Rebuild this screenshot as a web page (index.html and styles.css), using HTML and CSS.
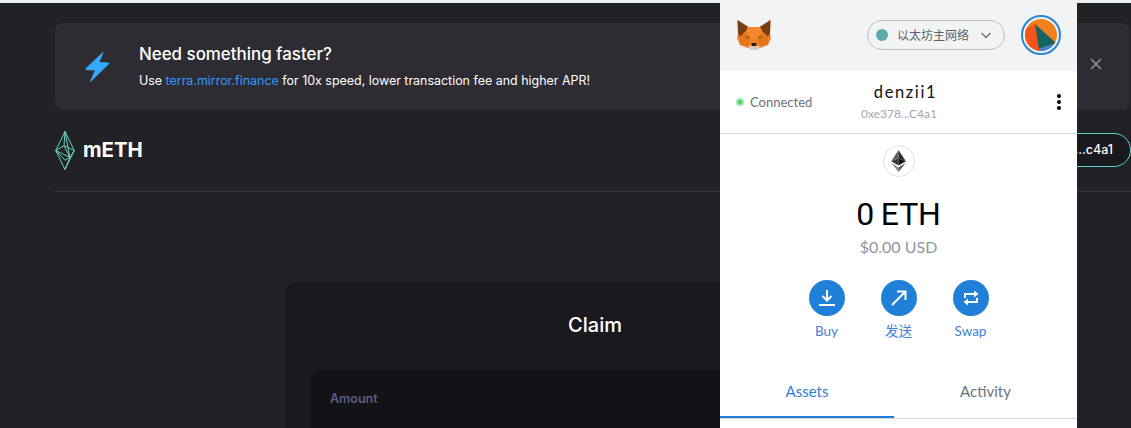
FILE: index.html
```html
<!DOCTYPE html>
<html lang="en">
<head>
    <meta charset="UTF-8">
    <meta name="viewport" content="width=device-width, initial-scale=1.0">
    <title>mETH Claim</title>
    <link rel="stylesheet" href="styles.css">
</head>
<body>
    <div class="topline"></div>
    <div class="app">
        <div class="banner">
            <svg class="bolt" width="25" height="30" viewBox="0 0 25 30">
                <path d="M18 0 L0.500 16.500 Q0 18 1.500 18 L10 18.500 L5 29 Q5 30 6 29.500 L24 12 Q25 10.500 23 10.500 L14.500 10 L18.500 0.500 Q18.500 0 18 0 Z" fill="#34a9ff"/>
            </svg>
            <div class="banner-text">
                <h2>Need something faster?</h2>
                <p>Use <a href="#">terra.mirror.finance</a> for 10x speed, lower transaction fee and higher APR!</p>
            </div>
            <svg class="close" width="12" height="12" viewBox="0 0 12 12">
                <path d="M1 1 L11 11 M11 1 L1 11" stroke="#8d8e93" stroke-width="1.600" fill="none"/>
            </svg>
        </div>
        <header class="nav">
            <div class="logo">
                <svg width="20" height="39" viewBox="0 0 20 40" fill="none" stroke="#69d4c5" stroke-width="1">
                    <path d="M10 0.500 L19.500 20 L10 39.500 L0.500 20 Z"/>
                    <path d="M10 0.500 L9 15 L0.500 20 L15 27 L19.500 20 L9 15 L15 27 L10 39.500"/>
                    <path d="M10 0.500 L15 27 M0.500 20 L10 30 L15 27"/>
                </svg>
                <span>mETH</span>
            </div>
            <div class="wallet">0xe378...c4a1</div>
        </header>
        <section class="claim">
            <h3>Claim</h3>
            <div class="field"><label>Amount</label></div>
        </section>
    </div>

    <div class="popup">
        <div class="mm-top">
            <svg class="fox" width="34" height="32" viewBox="0 0 34 32">
                <path d="M0.500 1 L12 8 L22 8 L33.500 1 L33 14 L34 19 L31 26 L23 29 L11 29 L3 26 L0 19 L1 14 Z" fill="#ef8229"/>
                <path d="M0.500 1 L11 8 L9 12 L3 18 L1 14 Z" fill="#763d16"/>
                <path d="M33.500 1 L23 8 L25 12 L31 18 L33 14 Z" fill="#763d16"/>
                <path d="M11 8 L23 8 L25 12 L21 20 L13 20 L9 12 Z" fill="#f5882e"/>
                <path d="M3 18 L9 12 L13 20 L11 27 L3 25 Z M31 18 L25 12 L21 20 L23 27 L31 25 Z" fill="#e2761b"/>
                <path d="M7 18 L13 17 L12 20 Z M27 18 L21 17 L22 20 Z" fill="#a8591c"/>
                <path d="M11 27 L23 27 L21 31 L13 31 Z" fill="#d9c9b9"/>
                <path d="M14.500 24 L19.500 24 L19 27 L15 27 Z" fill="#231a14"/>
            </svg>
            <div class="network">
                <span class="net-dot"></span>
                <span class="net-name">以太坊主网络</span>
                <svg width="12" height="7" viewBox="0 0 12 7"><path d="M1.500 1 L6 5.500 L10.500 1" stroke="#6a737d" stroke-width="1.300" fill="none"/></svg>
            </div>
            <div class="avatar">
                <svg width="32" height="32" viewBox="0 0 32 32">
                    <rect width="32" height="32" fill="#ef801e"/>
                    <path d="M10 5 L0 10 L0 32 L15 32 Z" fill="#f5541a"/>
                    <path d="M10 5 L31 24 L14 30 Z" fill="#16635f"/>
                    <path d="M14 30 L31 24 L24 32 L14 32 Z" fill="#3b82e0"/>
                </svg>
            </div>
        </div>
        <div class="account">
            <div class="status"><i></i>Connected</div>
            <div class="acc-name">
                <strong>denzii1</strong>
                <small>0xe378...C4a1</small>
            </div>
            <div class="kebab"><i></i><i></i><i></i></div>
        </div>
        <div class="balance">
            <div class="eth-icon">
                <svg width="15" height="22" viewBox="0 0 16 24">
                    <path d="M8 0 L0 12.200 L8 9 Z" fill="#606060"/>
                    <path d="M8 0 L16 12.200 L8 9 Z" fill="#2e2e2e"/>
                    <path d="M0 12.200 L8 17 L8 9 Z" fill="#3a3a3a"/>
                    <path d="M16 12.200 L8 17 L8 9 Z" fill="#141414"/>
                    <path d="M0 14 L8 24 L8 19 Z" fill="#8a8a8a"/>
                    <path d="M16 14 L8 24 L8 19 Z" fill="#555"/>
                </svg>
            </div>
            <div class="amount">0 ETH</div>
            <div class="usd">$0.00 USD</div>
            <div class="actions">
                <div class="action">
                    <span class="round">
                        <svg width="18" height="18" viewBox="0 0 18 18" fill="none" stroke="#fff" stroke-width="2">
                            <path d="M9 1 L9 11 M4.500 7 L9 11.500 L13.500 7 M1 16 L17 16"/>
                        </svg>
                    </span>
                    Buy
                </div>
                <div class="action">
                    <span class="round">
                        <svg width="18" height="18" viewBox="0 0 18 18" fill="none" stroke="#fff" stroke-width="2">
                            <path d="M2 16 L15 3 M7 2.500 L15.500 2.500 L15.500 11"/>
                        </svg>
                    </span>
                    发送
                </div>
                <div class="action">
                    <span class="round">
                        <svg width="18" height="18" viewBox="0 0 18 18" fill="none" stroke="#fff" stroke-width="2">
                            <path d="M3 9 L3 5 L13 5 M15 9 L15 13 L5 13"/>
                            <path d="M12 1.500 L16.500 5 L12 8.500 Z M6 9.500 L1.500 13 L6 16.500 Z" fill="#fff" stroke="none"/>
                        </svg>
                    </span>
                    Swap
                </div>
            </div>
        </div>
        <div class="tabs">
            <div class="tab active">Assets</div>
            <div class="tab">Activity</div>
        </div>
    </div>
</body>
</html>
```

FILE: styles.css
```css
* {
    box-sizing: border-box;
}

html, body {
    height: 100%;
}

body {
    margin: 0;
    overflow: hidden;
    background: #222126;
    font-family: 'Inter', 'Noto Sans CJK SC', sans-serif;
}

.topline {
    height: 3px;
    background: #eceff1;
}

.app {
    padding: 20px 0 0 55px;
    color: #fff;
}

.banner {
    display: flex;
    align-items: center;
    height: 87px;
    margin-right: 1px;
    padding-left: 30px;
    background: #2d2c32;
    border-radius: 8px;
}

.bolt {
    flex: none;
}

.banner-text {
    margin-left: 29px;
    flex: 1;
}

.banner-text h2 {
    margin: 0 0 7px;
    font-size: 16.900px;
    font-weight: 500;
    line-height: 22px;
}

.banner-text p {
    margin: 0;
    font-size: 12.450px;
    line-height: 18px;
}

.banner-text a {
    color: #2f9bff;
    text-decoration: none;
}

.close {
    flex: none;
    margin-right: 28px;
    margin-top: -5px;
}

.nav {
    display: flex;
    align-items: center;
    justify-content: space-between;
    height: 82px;
    border-bottom: 1px solid #36353b;
}

.logo {
    display: flex;
    align-items: center;
    gap: 8px;
    font-size: 20.400px;
    font-weight: 700;
}

.logo span {
    margin-top: -2px;
}

.wallet {
    width: 200px;
    height: 34px;
    margin-top: -2px;
    padding: 0 17px;
    line-height: 32px;
    text-align: right;
    font-size: 12.500px;
    font-weight: 500;
    border: 1px solid #5fd0d0;
    border-radius: 17px;
    background: #1a191e;
}

.claim {
    width: 620px;
    height: 146px;
    margin: 90px 0 0 230px;
    padding-top: 31px;
    background: #1a191e;
    border-radius: 12px 12px 0 0;
}

.claim h3 {
    margin: 0 0 33px;
    text-align: center;
    font-size: 20px;
    font-weight: 500;
    line-height: 24px;
}

.field {
    height: 58px;
    margin-left: 25px;
    padding: 21px 20px 0;
    background: #131217;
    border-radius: 12px 12px 0 0;
}

.field label {
    display: block;
    font-size: 12.500px;
    font-weight: 600;
    line-height: 15px;
    color: #5b5f83;
}

/* metamask popup, sits on top of the page */
.popup {
    position: absolute;
    top: 0;
    left: 720px;
    width: 357px;
    height: 428px;
    background: #fff;
    font-family: 'Lato', 'Noto Sans CJK SC', sans-serif;
}

.mm-top {
    display: flex;
    align-items: center;
    height: 71px;
    padding: 0 16px 1px 17px;
    background: #f2f3f4;
}

.network {
    display: flex;
    align-items: center;
    width: 138px;
    height: 30px;
    margin-left: 96px;
    padding: 0 12px 0 8px;
    border: 1px solid #bbc0c5;
    border-radius: 15px;
    color: #5d6268;
    font-size: 12px;
}

.net-dot {
    width: 12px;
    height: 12px;
    margin-right: 9px;
    border-radius: 50%;
    background: #62a9ab;
}

.net-name {
    flex: 1;
    padding-bottom: 2px;
}

.avatar {
    display: flex;
    align-items: center;
    justify-content: center;
    width: 40px;
    height: 40px;
    margin-left: 16px;
    border: 2px solid #2a84d8;
    border-radius: 50%;
}

.avatar svg {
    border-radius: 50%;
}

.account {
    display: grid;
    grid-template-columns: 1fr auto 1fr;
    align-items: center;
    height: 63px;
    padding: 0 15px 0 16px;
    border-bottom: 1px solid #d6d9dc;
}

.status {
    display: flex;
    align-items: center;
    gap: 6px;
    font-size: 13px;
    color: #6a737d;
    margin-top: -1px;
}

.status i {
    width: 8px;
    height: 8px;
    border-radius: 50%;
    background: #4cc96a;
    border: 2px solid #9ae8ac;
}

.acc-name {
    text-align: center;
}

.acc-name strong {
    display: block;
    margin-top: -2px;
    padding-left: 13px;
    font-size: 16.500px;
    font-weight: 400;
    letter-spacing: 1.600px;
    line-height: 20px;
    color: #111;
}

.acc-name small {
    display: block;
    margin-top: 5px;
    font-size: 12px;
    line-height: 14px;
    color: #9fa6ae;
}

.kebab {
    display: flex;
    flex-direction: column;
    gap: 2px;
    justify-self: end;
    margin-right: 1px;
}

.kebab i {
    width: 4px;
    height: 4px;
    border-radius: 50%;
    background: #000;
}

.balance {
    display: flex;
    flex-direction: column;
    align-items: center;
    padding-top: 11px;
}

.eth-icon {
    display: flex;
    align-items: center;
    justify-content: center;
    width: 32px;
    height: 32px;
    border: 1px solid #dedede;
    border-radius: 50%;
}

.amount {
    margin-top: 18px;
    font-family: 'Roboto', sans-serif;
    font-size: 32px;
    line-height: 38px;
    letter-spacing: -0.200px;
    word-spacing: -1px;
    color: #000;
}

.usd {
    margin-top: 4px;
    font-size: 16px;
    line-height: 20px;
    color: #8f969e;
}

.actions {
    display: flex;
    gap: 36px;
    margin-top: 23px;
}

.action {
    display: flex;
    flex-direction: column;
    align-items: center;
    gap: 7px;
    width: 36px;
    font-size: 13.500px;
    line-height: 16px;
    color: #3f82d8;
}

.round {
    display: flex;
    align-items: center;
    justify-content: center;
    flex: none;
    width: 36px;
    height: 36px;
    border-radius: 50%;
    background: #2080d8;
}

.tabs {
    display: flex;
    margin-top: 31px;
    border-bottom: 1px solid #d6d9dc;
}

.tab {
    flex: 1;
    height: 48px;
    padding-top: 11px;
    text-align: center;
    font-size: 15px;
    line-height: 20px;
    color: #6a737d;
}

.tab.active {
    flex: none;
    width: 174px;
    color: #2f80d8;
    border-bottom: 2px solid #2080d8;
    margin-bottom: -1px;
}
```
